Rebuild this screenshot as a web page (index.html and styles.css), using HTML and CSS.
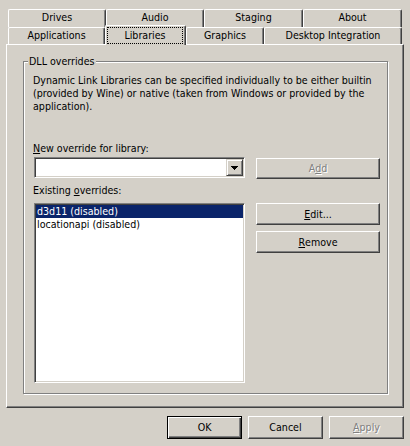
FILE: index.html
```html
<!DOCTYPE html>
<html>
<head>
<meta charset="utf-8">
<title>Wine configuration</title>
<link rel="stylesheet" href="styles.css">
</head>
<body>
<div class="dialog">
  <div class="tabs">
    <div class="tab-row row-top">
      <div class="tab t-drives">Drives</div>
      <div class="tab t-audio">Audio</div>
      <div class="tab t-staging">Staging</div>
      <div class="tab t-about">About</div>
    </div>
    <div class="tab-row row-bottom">
      <div class="tab t-apps">Applications</div>
      <div class="tab t-libs selected"><span class="focus">Libraries</span></div>
      <div class="tab t-gfx">Graphics</div>
      <div class="tab t-desk">Desktop Integration</div>
    </div>
  </div>
  <div class="panel">
    <div class="group">
      <div class="group-title">DLL overrides</div>
      <p class="desc">Dynamic Link Libraries can be specified individually to be either builtin<br>(provided by Wine) or native (taken from Windows or provided by the<br>application).</p>
      <div class="form">
        <div class="lbl"><u>N</u>ew override for library:</div>
        <div class="combo">
          <div class="combo-btn">
            <svg class="arrow" width="7" height="4" viewBox="0 0 7 4" shape-rendering="crispEdges"><rect x="0" y="0" width="7" height="1"/><rect x="1" y="1" width="5" height="1"/><rect x="2" y="2" width="3" height="1"/><rect x="3" y="3" width="1" height="1"/></svg>
          </div>
        </div>
        <button class="btn add disabled">A<u>d</u>d</button>
        <div class="lbl lbl-existing">Existing <u>o</u>verrides:</div>
        <div class="listbox">
          <div class="item selected">d3d11 (disabled)</div>
          <div class="item">locationapi (disabled)</div>
        </div>
        <div class="side">
          <button class="btn side-btn"><u>E</u>dit...</button>
          <button class="btn side-btn"><u>R</u>emove</button>
        </div>
      </div>
    </div>
  </div>
  <div class="footer">
    <button class="btn big default">OK</button>
    <button class="btn big">Cancel</button>
    <button class="btn big disabled"><u>A</u>pply</button>
  </div>
</div>
</body>
</html>
```
FILE: styles.css
```css
* { box-sizing: border-box; }
html, body { margin: 0; padding: 0; }
body {
  background: #d4d0c8;
  font-family: "DejaVu Sans Condensed", "DejaVu Sans", sans-serif;
  font-stretch: condensed;
  font-size: 10.6px;
  line-height: 13px;
  color: #000;
}
.dialog { width: 410px; height: 446px; padding-top: 9px; overflow: hidden; }

/* tabs */
.tabs { margin: 0 6px; }
.tab-row { display: flex; padding-left: 2px; }
.row-top { height: 18px; }
.row-bottom { height: 17px; }
.tab {
  flex: none;
  text-align: center;
  white-space: nowrap;
  background: #d4d0c8;
  border-top: 1px solid #fff;
  border-left: 1px solid #fff;
  border-right: 1px solid #404040;
  border-radius: 2px 2px 0 0;
  box-shadow: inset -1px 0 0 #808080;
  padding-top: 1px;
}
.t-drives { width: 98px; }
.t-audio { width: 98px; }
.t-staging { width: 99px; }
.t-about { width: 99px; }
.t-apps { width: 97px; }
.t-libs { width: 81px; }
.t-gfx { width: 78px; }
.t-desk { width: 138px; }
.tab.selected {
  align-self: flex-start;
  height: 20px;
  margin-top: -2px;
  padding-top: 0;
  position: relative;
  z-index: 1;
}
.focus {
  display: block;
  margin: 1px 2px 0 1px;
  height: 17px;
  padding: 1px 0;
  border: 1px dotted #000;
}

/* panel */
.panel {
  width: 398px;
  height: 364px;
  margin: 0 6px;
  border: 1px solid;
  border-color: #fff #404040 #404040 #fff;
  box-shadow: inset -1px -1px 0 #808080;
  padding: 16px 0 0 16px;
}
.group {
  width: 365px;
  height: 333px;
  border: 1px solid #808080;
  box-shadow: 1px 1px 0 #fff, inset 1px 1px 0 #fff;
  padding: 0 7px 0 9px;
}
.group-title {
  width: max-content;
  margin: -7px 0 0 -5px;
  padding: 0 1px;
  background: #d4d0c8;
}
.desc { margin: 6px 0 0; white-space: nowrap; }

.form {
  display: grid;
  grid-template-columns: 212px 124px;
  column-gap: 11px;
  align-items: start;
  margin-top: 29px;
}
.lbl { grid-column: 1 / -1; white-space: nowrap; }
.lbl-existing { margin-top: 5px; }

.combo {
  margin: 2px 0 0 1px;
  height: 21px;
  background: #fff;
  border: 1px solid;
  border-color: #808080 #fff #fff #808080;
  box-shadow: inset 1px 1px 0 #404040, inset -1px -1px 0 #d4d0c8;
  padding: 1px;
  display: flex;
  justify-content: flex-end;
}
.combo-btn {
  width: 17px;
  height: 17px;
  background: #d4d0c8;
  border: 1px solid;
  border-color: #d4d0c8 #404040 #404040 #d4d0c8;
  box-shadow: inset 1px 1px 0 #fff, inset -1px -1px 0 #808080;
  display: flex;
  align-items: center;
  justify-content: center;
}
.arrow { display: block; fill: #000; }

.btn {
  font: inherit;
  color: #000;
  background: #d4d0c8;
  border: 1px solid;
  border-color: #fff #404040 #404040 #fff;
  border-radius: 0;
  box-shadow: inset -1px -1px 0 #808080;
  padding: 0;
  margin: 0;
  display: flex;
  align-items: center;
  justify-content: center;
  white-space: nowrap;
}
.btn.disabled { color: #808080; text-shadow: 1px 1px 0 #fff; }
.btn.default {
  border: 1px solid #000;
  box-shadow: inset 1px 1px 0 #fff, inset -1px -1px 0 #404040, inset -2px -2px 0 #808080;
}
.add { margin-top: 3px; height: 21px; width: 124px; }

.listbox {
  margin: 6px 0 0 1px;
  height: 180px;
  background: #fff;
  border: 1px solid;
  border-color: #808080 #fff #fff #808080;
  box-shadow: inset 1px 1px 0 #404040, inset -1px -1px 0 #d4d0c8;
  padding: 1px;
}
.item { height: 13px; line-height: 13px; padding-left: 1px; white-space: nowrap; }
.item.selected { background: #0a246a; color: #fff; }

.side { margin-top: 6px; display: flex; flex-direction: column; gap: 6px; }
.side-btn { width: 124px; height: 22px; }

.footer {
  display: flex;
  justify-content: flex-end;
  gap: 6px;
  padding-right: 6px;
  margin-top: 8px;
}
.big { width: 75px; height: 23px; }
```
